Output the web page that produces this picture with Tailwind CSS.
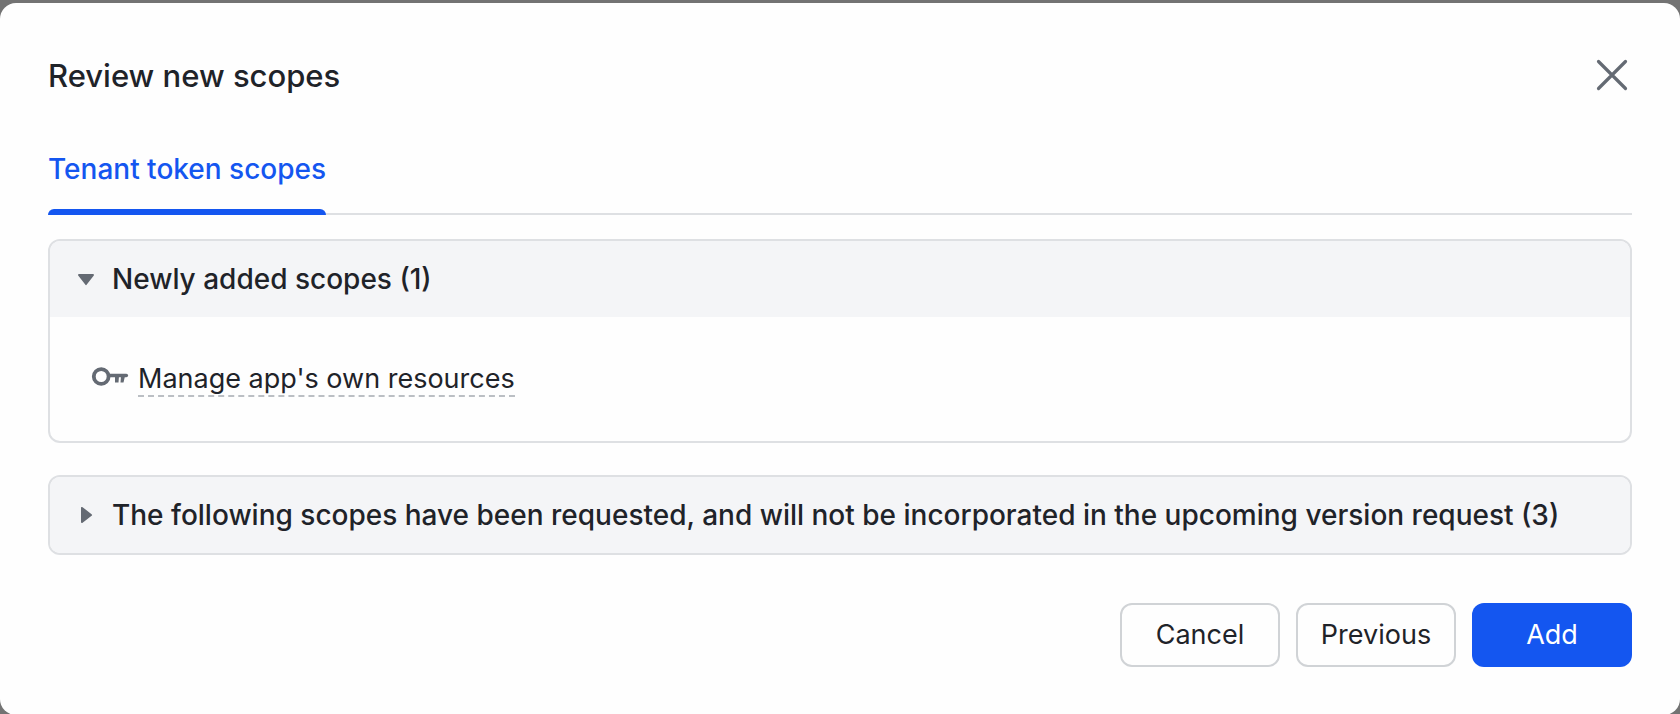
<!DOCTYPE html>
<html lang="en">
<head>
  <meta charset="UTF-8" />
  <meta name="viewport" content="width=device-width, initial-scale=1.0" />
  <title>Review new scopes</title>
  <script src="https://cdn.jsdelivr.net/npm/@tailwindcss/browser@4"></script>
</head>
<body class="h-screen overflow-hidden bg-[#737373] pt-[3px] font-['Inter',sans-serif] text-[27px] leading-10 text-[#1f2329]">
  <div role="dialog" aria-labelledby="title" class="rounded-2xl bg-[#fefefe] px-12 pt-12 pb-12">
    <div class="flex items-center justify-between">
      <h2 id="title" class="text-[31px] leading-[50px] font-medium">Review new scopes</h2>
      <button type="button" aria-label="Close" class="flex size-10 items-center justify-center text-[#646a73]">
        <svg class="size-10" viewBox="0 0 40 40" fill="none" stroke="currentColor" stroke-width="3.2" stroke-linecap="round">
          <path d="M6.500 5.500l27 27M33.500 5.500l-27 27" />
        </svg>
      </button>
    </div>

    <div role="tablist" class="mt-8 flex border-b-2 border-[#dee0e3]">
      <button type="button" role="tab" aria-selected="true" class="-mb-[2px] pt-4 text-[28px] font-medium text-[#1456f0]">
        Tenant token scopes
        <span class="mt-5 block h-[6px] rounded-t-md bg-[#1456f0]"></span>
      </button>
    </div>

    <section class="mt-6 overflow-hidden rounded-xl border-2 border-[#dee0e3]">
      <button type="button" aria-expanded="true" class="flex h-[76px] w-full items-center gap-[14px] bg-[#f4f5f7] px-6 text-left text-[28px] font-medium">
        <svg class="size-6 text-[#646a73]" viewBox="0 0 24 24" fill="currentColor">
          <path d="M5 7h14a1 1 0 0 1 .8 1.600l-7 9a1 1 0 0 1-1.600 0l-7-9a1 1 0 0 1 .8-1.600z" />
        </svg>
        Newly added scopes (1)
      </button>
      <div class="flex items-center gap-2 px-10 pt-[46px] pb-11">
        <svg class="h-8 w-10 text-[#646a73]" viewBox="0 2 40 32" fill="none" stroke="currentColor">
          <circle cx="11.200" cy="14.500" r="7.400" stroke-width="3.800" />
          <path d="M20 13.500h16.300" stroke-width="3.600" stroke-linecap="round" />
          <path d="M25 14h4l-.5 6.500h-3.500zM31 14h4l-1.500 6.500h-3z" fill="currentColor" stroke="none" />
        </svg>
        <a href="#" class="border-b-2 border-dashed border-[#bbbfc4] leading-8">Manage app's own resources</a>
      </div>
    </section>

    <section class="mt-8 overflow-hidden rounded-xl border-2 border-[#dee0e3]">
      <button type="button" aria-expanded="false" class="flex h-[76px] w-full items-center gap-[14px] bg-[#f4f5f7] px-6 text-left text-[28px] font-medium">
        <svg class="size-6 shrink-0 text-[#646a73]" viewBox="0 0 24 24" fill="currentColor">
          <path d="M7 5a1 1 0 0 1 1.600-.8l9 7a1 1 0 0 1 0 1.600l-9 7a1 1 0 0 1-1.600-.8z" />
        </svg>
        The following scopes have been requested, and will not be incorporated in the upcoming version request (3)
      </button>
    </section>

    <div class="mt-12 flex justify-end gap-4">
      <button type="button" class="h-16 w-40 rounded-xl border-2 border-[#d0d3d6]">Cancel</button>
      <button type="button" class="h-16 w-40 rounded-xl border-2 border-[#d0d3d6]">Previous</button>
      <button type="button" class="h-16 w-40 rounded-xl bg-[#1456f0] text-white">Add</button>
    </div>
  </div>
</body>
</html>
